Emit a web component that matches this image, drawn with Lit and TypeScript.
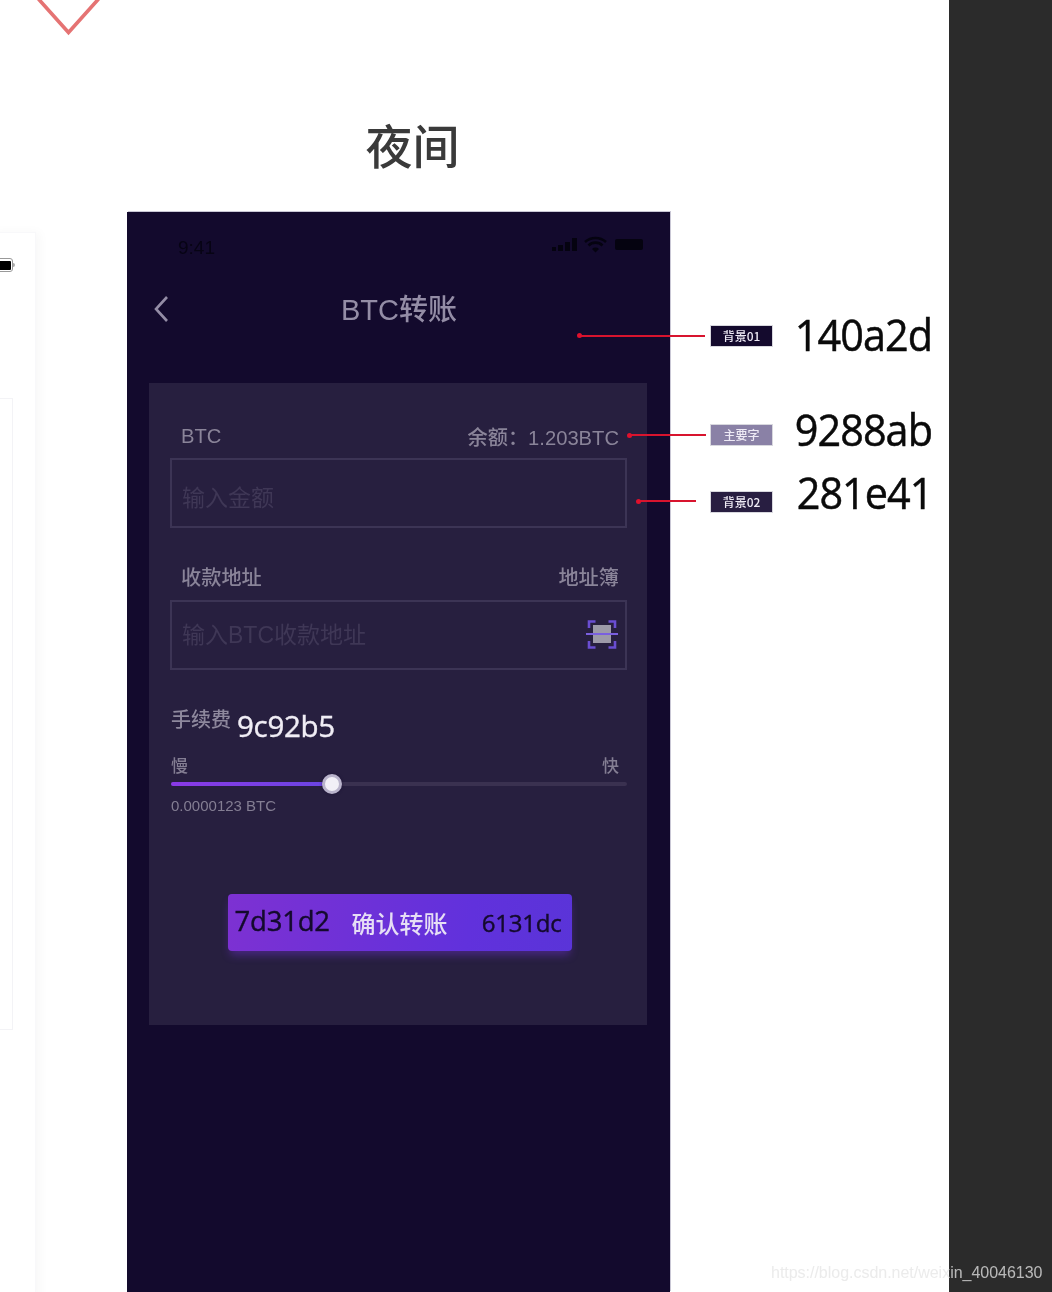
import { LitElement, html, css } from "lit";
import { customElement } from "lit/decorators.js";

const SANS = css`"Liberation Sans", "Noto Sans CJK SC", sans-serif`;
const HEX = css`"Open Sans", "Noto Sans CJK SC", sans-serif`;

@customElement("app-root")
export class AppRoot extends LitElement {
  static styles = css`
    :host { display: block; width: 1052px; height: 1292px; overflow: hidden; }
    .page { position: relative; width: 1052px; height: 1292px; display: grid; grid-template-columns: 949px 103px; overflow: hidden; font-family: ${SANS}; filter: blur(0.5px); }
    .sheet { background: #fff; display: flex; flex-direction: column; align-items: flex-start; padding-left: 127px; }
    .side { background: #2b2b2b; }
    .heading { width: 543px; height: 212px; box-sizing: border-box; padding: 112px 0 0 28px; text-align: center; font: 500 47px/64px "Noto Sans CJK SC", sans-serif; color: #3a3a3a; }
    .phone { width: 543px; height: 1080px; background: #130a2d; box-shadow: 1px -1px 0 0 rgba(120,115,150,.4); box-sizing: border-box; padding: 0 23px 0 22px; display: flex; flex-direction: column; }
    .status { height: 72px; display: flex; align-items: center; justify-content: space-between; margin: 0 -23px 0 -22px; padding: 0 26px 0 51px; }
    .time { font-size: 19px; color: #070414; }
    .status svg { display: block; margin-top: -6px; }
    .nav { height: 50px; position: relative; display: flex; align-items: center; justify-content: center; margin-bottom: 49px; }
    .nav svg { position: absolute; left: 4px; top: 11px; }
    .title { font-size: 29px; font-weight: 500; line-height: 46px; padding: 1px 0 0 2px; color: #948da6; }
    .card { background: #271f3f; height: 642px; box-sizing: border-box; padding: 42px 20px 0 21px; display: flex; flex-direction: column; }
    .labels { height: 24px; box-sizing: border-box; padding: 0 8px 2px 11px; display: flex; align-items: center; justify-content: space-between; font-size: 20.200px; font-weight: 500; color: #8a8499; }
    .input { height: 70px; box-sizing: border-box; margin-top: 9px; border: 2px solid #3c3455; display: flex; align-items: center; justify-content: space-between; padding: 6px 7px 0 10px; font-size: 23px; color: #3f3756; }
    .second { margin-top: 37px; }
    .input.addr { margin-top: 11px; padding-top: 0; }
    .input.addr span { margin-top: -4px; }
    .fee { display: flex; align-items: flex-start; gap: 6px; height: 48px; margin-top: 32px; padding-left: 1px; }
    .fee b { font-weight: 500; font-size: 20px; line-height: 36px; color: #8e889d; }
    .fee i { font: 500 29.500px/48px ${HEX}; font-style: normal; letter-spacing: -0.300px; color: #f0edf5; -webkit-text-stroke: 0.4px #f0edf5; }
    .speed { display: flex; justify-content: space-between; height: 24px; margin-top: 5px; padding: 0 8px 0 1px; font-size: 17px; font-weight: 500; line-height: 24px; color: #847e93; }
    .track { position: relative; height: 4px; margin: 3px 0 0 1px; background: #3a3150; border-radius: 2px; }
    .fill { height: 4px; border-radius: 2px; background: linear-gradient(90deg, #8a3ae6, #6a45e2); }
    .thumb { position: absolute; top: -8px; width: 20px; height: 20px; margin-left: -10px; box-sizing: border-box; border-radius: 50%; background: #f2f0f7; border: 3px solid #b9b3cb; box-shadow: 0 0 3px rgba(20,10,45,.6); }
    .amount { margin: 11px 0 0 1px; font-size: 15px; line-height: 18px; color: #847e93; }
    .btn { align-self: center; width: 344px; height: 57px; margin-top: 79px; margin-left: 2px; box-sizing: border-box; border-radius: 4px; background: linear-gradient(100deg, #7d31d2, #6131dc 70%, #5a34d8); box-shadow: 0 6px 8px -2px rgba(112,49,215,.45); display: flex; align-items: center; padding: 0 10px 0 7px; font-family: ${HEX}; font-weight: 500; color: #140a2d; -webkit-text-stroke: 0.4px #140a2d; }
    .btn .a { font-size: 27.500px; width: 117px; line-height: 54px; margin-top: -4px; letter-spacing: -0.200px; }
    .btn .m { font: 500 24px/1 "Noto Sans CJK SC", sans-serif; color: #e6def5; width: 96px; -webkit-text-stroke: 0; }
    .btn .b { font-size: 24px; margin-left: auto; line-height: 54px; letter-spacing: -0.200px; }

    .ann { position: absolute; }
    .line { height: 2px; background: #d8142e; }
    .line::before { content: ""; position: absolute; left: -2px; top: -1.500px; width: 5px; height: 5px; border-radius: 50%; background: #e0102c; }
    .swatch { position: absolute; left: 710px; width: 63px; height: 22px; display: flex; align-items: center; justify-content: center; font: 500 12px/1 "Noto Sans CJK SC", sans-serif; color: #eeeaf5; border: 1px solid #d8d8de; box-sizing: border-box; }
    .hex { position: absolute; right: 120px; font: 500 44px/56px ${HEX}; color: #0a0a0a; -webkit-text-stroke: 0.5px #0a0a0a; letter-spacing: -1px; transform: scaleX(.94); transform-origin: right center; }
    .chevron { position: absolute; left: 30px; top: -6px; }
    .ghost { position: absolute; left: -10px; top: 232px; width: 46px; height: 1070px; background: #fff; border: 1px solid #f8f8fa; box-shadow: 4px 0 10px rgba(0,0,0,.03); box-sizing: border-box; }
    .ghost2 { position: absolute; left: -10px; top: 398px; width: 23px; height: 632px; border: 1px solid #f3f3f6; box-sizing: border-box; }
    .batt { position: absolute; left: -8px; top: 258px; width: 21px; height: 14px; border: 1px solid #999; border-radius: 3px; box-sizing: border-box; padding: 1.500px; background: #fff; }
    .batt::before { content: ""; display: block; height: 100%; background: #000; border-radius: 1px; }
    .battcap { position: absolute; left: 13px; top: 263px; width: 2px; height: 4px; background: #aaa; border-radius: 0 2px 2px 0; }
    .mark { position: absolute; left: 771px; top: 1263px; font-size: 16px; line-height: 20px; letter-spacing: -0.020px; white-space: nowrap; color: rgba(229,229,229,.76); }
  `;

  render() {
    return html`
      <div class="page">
        <div class="sheet">
          <div class="heading">夜间</div>
          <div class="phone">
            <div class="status">
              <span class="time">9:41</span>
              <svg width="93" height="20" viewBox="0 0 93 20" fill="#050310">
                <rect x="1" y="12" width="4" height="4"/><rect x="7" y="10" width="5" height="6"/><rect x="14" y="7" width="5" height="9"/><rect x="21" y="3" width="5" height="13"/>
                <path d="M34 7a16 16 0 0 1 21 0" fill="none" stroke="#050310" stroke-width="2.600"/>
                <path d="M37.500 10.500a10 10 0 0 1 14 0" fill="none" stroke="#050310" stroke-width="2.600"/>
                <path d="M41 14a5 5 0 0 1 7 0l-3.500 3.500z"/>
                <rect x="64" y="4" width="28" height="11" rx="2"/>
              </svg>
            </div>
            <div class="nav">
              <svg width="20" height="28" viewBox="0 0 20 28" fill="none" stroke="#948da6" stroke-width="2.600"><path d="M14 2 3 14l11 12"/></svg>
              <span class="title">BTC转账</span>
            </div>
            <div class="card">
              <div class="labels"><span>BTC</span><span>余额：1.203BTC</span></div>
              <div class="input">输入金额</div>
              <div class="labels second"><span>收款地址</span><span>地址簿</span></div>
              <div class="input addr">
                <span>输入BTC收款地址</span>
                <svg width="32" height="30" viewBox="0 0 32 30" fill="none">
                  <rect x="7" y="5" width="18" height="18" fill="#9d9aa9"/>
                  <path d="M3 8V1.500h6.500M22.500 1.500H29V8M3 21v6.500h6.500M22.500 27.500H29V21" stroke="#6a4ed2" stroke-width="2.600"/>
                  <path d="M0 14h32" stroke="#7a5fe0" stroke-width="2"/>
                </svg>
              </div>
              <div class="fee"><b>手续费</b><span><i>9c92b5</i></span></div>
              <div class="speed"><span>慢</span><span>快</span></div>
              <div class="track">
                <div class="fill" style="width:35.400%"></div>
                <div class="thumb" style="left:35.400%"></div>
              </div>
              <div class="amount">0.0000123 BTC</div>
              <div class="btn">
                <span class="a">7d31d2</span>
                <span class="m">确认转账</span>
                <span class="b">6131dc</span>
              </div>
            </div>
          </div>
        </div>
        <div class="side"></div>

        <svg class="chevron" width="76" height="44" viewBox="0 0 76 44" fill="none" stroke="#e57373" stroke-width="3.600"><path d="M8.500 5 38.500 38.500 68.500 5"/></svg>
        <div class="ghost"></div>
        <div class="ghost2"></div>
        <div class="batt"></div>
        <div class="battcap"></div>

        <div class="ann line" style="left:579px;top:334.500px;width:126px"></div>
        <div class="ann line" style="left:629px;top:434px;width:77px"></div>
        <div class="ann line" style="left:638px;top:500px;width:58px"></div>
        <div class="swatch" style="top:325px;background:#140a2d">背景01</div>
        <div class="swatch" style="top:424px;background:#8a81a6">主要字</div>
        <div class="swatch" style="top:491px;background:#281e41">背景02</div>
        <div class="hex" style="top:306px">140a2d</div>
        <div class="hex" style="top:401px">9288ab</div>
        <div class="hex" style="top:464px">281e41</div>
        <div class="mark">https://blog.csdn.net/weixin_40046130</div>
      </div>
    `;
  }
}
